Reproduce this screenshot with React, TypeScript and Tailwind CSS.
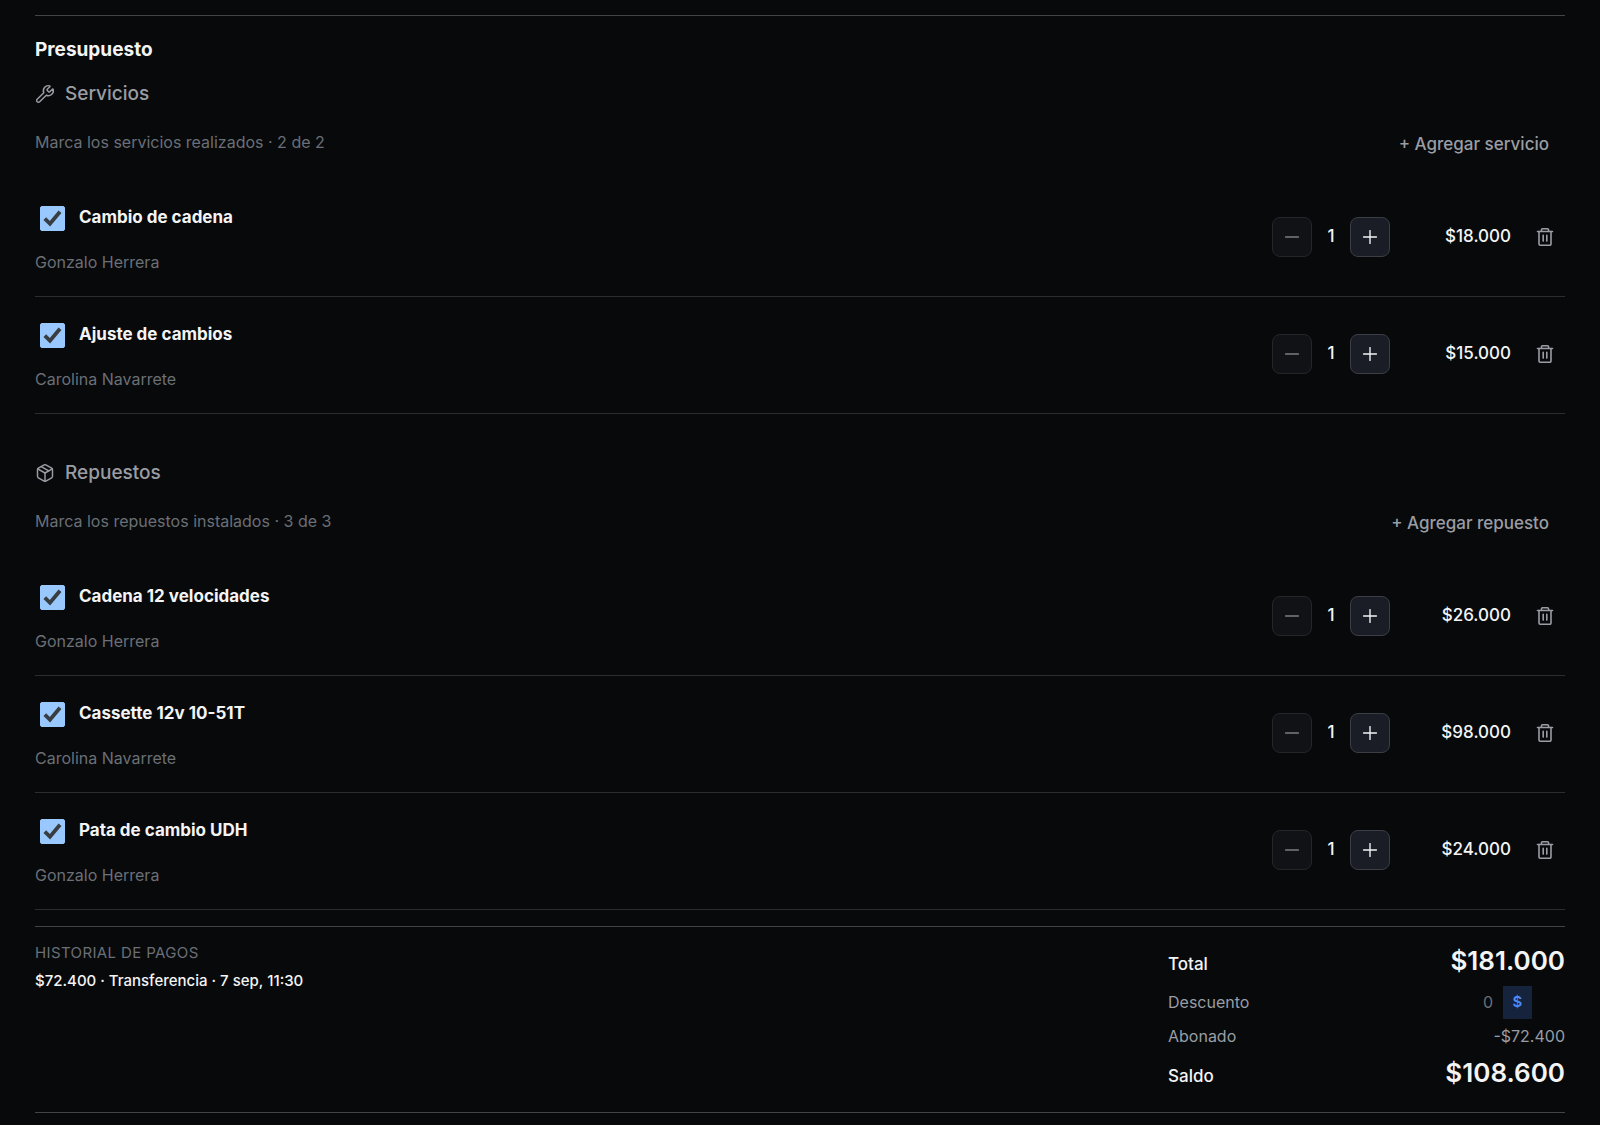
import React, { useState } from 'react';
import { Wrench, Package, Minus, Plus } from 'lucide-react';

type Item = {
  id: string;
  name: string;
  assignee: string;
  price: number;
  qty: number;
  done: boolean;
};

const initialServices: Item[] = [
  { id: 's1', name: 'Cambio de cadena', assignee: 'Gonzalo Herrera', price: 18000, qty: 1, done: true },
  { id: 's2', name: 'Ajuste de cambios', assignee: 'Carolina Navarrete', price: 15000, qty: 1, done: true },
];

const initialParts: Item[] = [
  { id: 'r1', name: 'Cadena 12 velocidades', assignee: 'Gonzalo Herrera', price: 26000, qty: 1, done: true },
  { id: 'r2', name: 'Cassette 12v 10-51T', assignee: 'Carolina Navarrete', price: 98000, qty: 1, done: true },
  { id: 'r3', name: 'Pata de cambio UDH', assignee: 'Gonzalo Herrera', price: 24000, qty: 1, done: true },
];

const PAID = 72400;

const formatPrice = (value: number) => '$' + String(value).replace(/\B(?=(\d{3})+$)/g, '.');

const sumItems = (items: Item[]) => items.reduce((acc, item) => acc + item.price * item.qty, 0);

const TrashIcon = () => (
  <svg width="18" height="20" viewBox="0 0 18 20" fill="none" stroke="currentColor" strokeWidth="1.6" strokeLinecap="round" strokeLinejoin="round">
    <path d="M1.5 4.5h15" />
    <path d="M5.4 4.3V3a1.2 1.2 0 0 1 1.2-1.2h4.8A1.2 1.2 0 0 1 12.6 3v1.3" />
    <path d="M3 4.5v12.6a1.2 1.2 0 0 0 1.2 1.2h9.6a1.2 1.2 0 0 0 1.2-1.2V4.5" />
    <path d="M7.2 8.3v5.8M10.8 8.3v5.8" />
  </svg>
);

const ItemRow = ({
  item,
  onChange,
  onRemove,
}: {
  item: Item;
  onChange: (patch: Partial<Item>) => void;
  onRemove: () => void;
}) => (
  <li className="flex items-center justify-between border-b border-[#2b2d30] pt-5 pb-[22px]">
    <div>
      <div className="flex h-9 items-center gap-3.5 pl-[5px]">
        <span className="relative flex size-[25px]">
          <input
            id={item.id}
            type="checkbox"
            checked={item.done}
            onChange={e => onChange({ done: e.target.checked })}
            className="peer size-[25px] appearance-none rounded-[2px] border border-[#99c8ff] checked:bg-[#99c8ff]"
          />
          <svg
            viewBox="0 0 25 25"
            fill="none"
            stroke="#383d41"
            strokeWidth="3.8"
            className="pointer-events-none absolute inset-0 hidden peer-checked:block"
          >
            <path d="M4.8 12.6l5.2 5.2L20 5.8" />
          </svg>
        </span>
        <label htmlFor={item.id} className="text-[17px] font-bold text-[#f4f4f5]">
          {item.name}
        </label>
      </div>
      <p className="mt-3.5 text-base leading-6 text-[#6b6f76]">{item.assignee}</p>
    </div>

    <div className="flex items-center">
      <button
        type="button"
        aria-label="Restar"
        disabled={item.qty <= 1}
        onClick={() => onChange({ qty: item.qty - 1 })}
        className="flex size-10 items-center justify-center rounded-lg border border-[#3b3e45] bg-[#1a1d26] text-[#f4f4f5] disabled:border-[#242629] disabled:bg-[#101216] disabled:text-[#7b7d80]"
      >
        <Minus size={22} strokeWidth={1.5} />
      </button>
      <span className="w-[38px] text-center text-[17px] font-medium text-[#f4f4f5]">{item.qty}</span>
      <button
        type="button"
        aria-label="Sumar"
        onClick={() => onChange({ qty: item.qty + 1 })}
        className="flex size-10 items-center justify-center rounded-lg border border-[#3b3e45] bg-[#1a1d26] text-[#f4f4f5]"
      >
        <Plus size={22} strokeWidth={1.5} />
      </button>
      <span className="w-[121px] text-right text-[17px] font-medium text-[#f4f4f5]">
        {formatPrice(item.price * item.qty)}
      </span>
      <button
        type="button"
        aria-label="Eliminar"
        onClick={onRemove}
        className="ml-3.5 flex size-10 items-center justify-center text-[#9a9da3]"
      >
        <TrashIcon />
      </button>
    </div>
  </li>
);

const ItemSection = ({
  title,
  icon,
  hint,
  addLabel,
  items,
  setItems,
}: {
  title: string;
  icon: React.ReactNode;
  hint: string;
  addLabel: string;
  items: Item[];
  setItems: React.Dispatch<React.SetStateAction<Item[]>>;
}) => {
  const done = items.filter(item => item.done).length;

  return (
    <section>
      <h3 className="flex items-center gap-2.5 text-[19px] leading-7 font-medium text-[#9a9da3]">
        {icon}
        {title}
      </h3>
      <div className="mt-5 flex h-[52px] items-start justify-between">
        <p className="text-base leading-7 text-[#6b6f76]">
          {hint} · {done} de {items.length}
        </p>
        <button type="button" className="mr-4 text-[17px] leading-8 font-medium text-[#9a9da3]">
          {addLabel}
        </button>
      </div>
      <ul>
        {items.map(item => (
          <ItemRow
            key={item.id}
            item={item}
            onChange={patch => setItems(prev => prev.map(i => (i.id === item.id ? { ...i, ...patch } : i)))}
            onRemove={() => setItems(prev => prev.filter(i => i.id !== item.id))}
          />
        ))}
      </ul>
    </section>
  );
};

const App = () => {
  const [services, setServices] = useState<Item[]>(initialServices);
  const [parts, setParts] = useState<Item[]>(initialParts);
  const [discount, setDiscount] = useState('');

  const total = sumItems(services) + sumItems(parts);
  const balance = total - (parseInt(discount, 10) || 0) - PAID;

  return (
    <div className="min-h-screen bg-[#07090b] px-[35px] pt-[15px] font-['Inter',sans-serif]">
      <div className="border-y border-[#424448] pt-4">
        <h2 className="text-[19px] leading-9 font-bold text-[#f4f4f5]">Presupuesto</h2>

        <div className="mt-3 flex flex-col gap-[45px]">
          <ItemSection
            title="Servicios"
            icon={<Wrench size={20} strokeWidth={1.75} />}
            hint="Marca los servicios realizados"
            addLabel="+ Agregar servicio"
            items={services}
            setItems={setServices}
          />
          <ItemSection
            title="Repuestos"
            icon={<Package size={20} strokeWidth={1.75} />}
            hint="Marca los repuestos instalados"
            addLabel="+ Agregar repuesto"
            items={parts}
            setItems={setParts}
          />
        </div>

        <div className="mt-4 flex items-start justify-between border-t border-[#424448] pt-3 pb-[19px]">
          <div className="text-[15px] leading-7">
            <h4 className="tracking-wide text-[#6b6f76] uppercase">Historial de pagos</h4>
            <p className="font-medium text-[#f4f4f5]">{formatPrice(PAID)} · Transferencia · 7 sep, 11:30</p>
          </div>

          {/* Totales */}
          <dl className="w-[397px]">
            <div className="flex items-baseline justify-between pb-0.5">
              <dt className="text-[17px] font-medium text-[#f4f4f5]">Total</dt>
              <dd className="text-[26px] leading-11 font-semibold text-[#f4f4f5]">{formatPrice(total)}</dd>
            </div>
            <div className="flex h-[34px] items-center justify-between">
              <dt className="text-base text-[#9a9da3]">
                <label htmlFor="discount">Descuento</label>
              </dt>
              <dd className="flex items-center gap-2.5 pr-[33px]">
                <input
                  id="discount"
                  type="text"
                  placeholder="0"
                  value={discount}
                  onChange={e => setDiscount(e.target.value)}
                  className="w-20 bg-transparent text-right text-base text-[#9a9da3] outline-none placeholder:text-[#6b6f76]"
                />
                <button type="button" className="h-[33px] w-[29px] bg-[#15233d] text-[15px] font-semibold text-[#4b8bf5]">
                  $
                </button>
              </dd>
            </div>
            <div className="flex h-[34px] items-center justify-between text-base text-[#9a9da3]">
              <dt>Abonado</dt>
              <dd>-{formatPrice(PAID)}</dd>
            </div>
            <div className="flex items-baseline justify-between">
              <dt className="text-[17px] font-medium text-[#f4f4f5]">Saldo</dt>
              <dd className="text-[26px] leading-10 font-semibold text-[#f4f4f5]">{formatPrice(balance)}</dd>
            </div>
          </dl>
        </div>
      </div>
    </div>
  );
};

export default App;
